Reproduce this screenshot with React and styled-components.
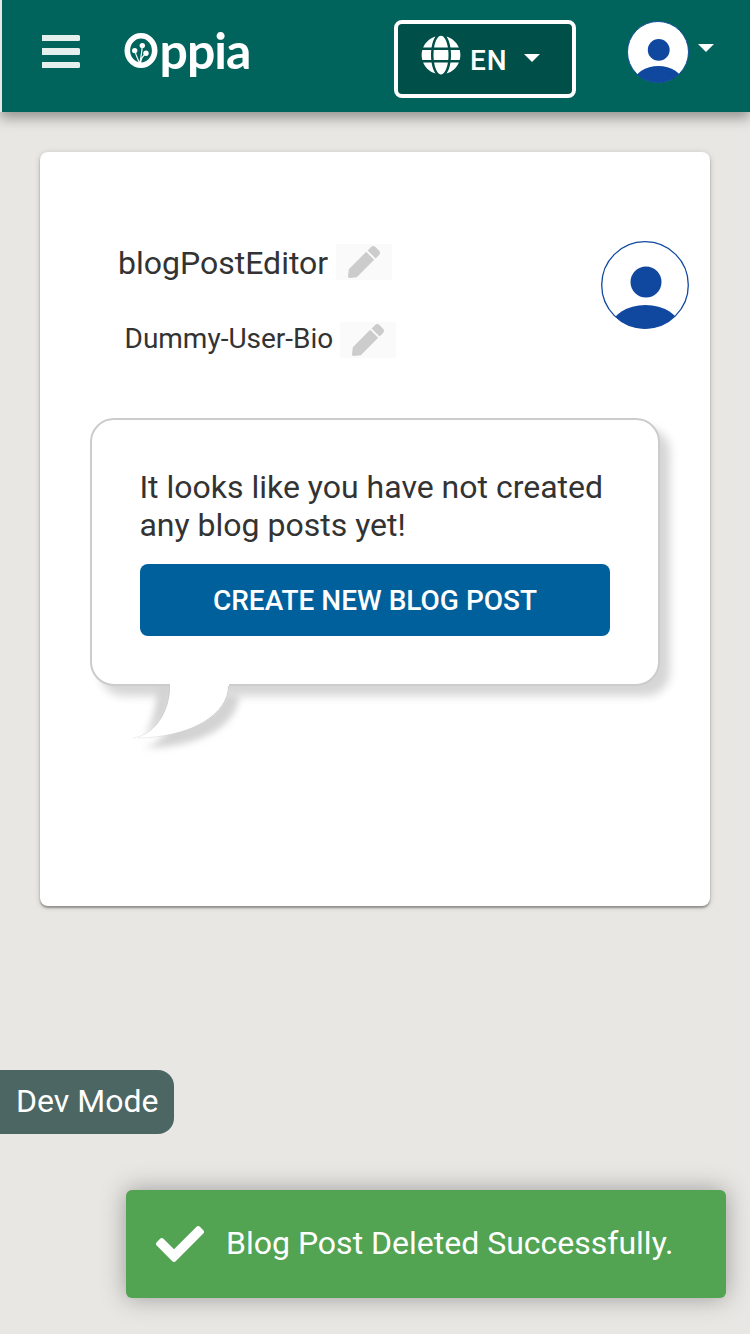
import React from 'react';
import styled, { createGlobalStyle } from 'styled-components';
import { FaCheck, FaGlobe, FaPen } from 'react-icons/fa';

const GlobalStyle = createGlobalStyle`
  * { box-sizing: border-box; }
  body {
    margin: 0;
    background: #e8e7e3;
    color: #333;
    font-family: Roboto, "Liberation Sans", sans-serif;
  }
  button { font: inherit; border: 0; padding: 0; }
  svg { display: block; flex: none; }
`;

const Page = styled.div`
  position: relative;
  height: 1334px;
  overflow: hidden;
`;

const Navbar = styled.header`
  display: flex;
  align-items: flex-start;
  height: 112px;
  padding: 20px 36px 0 40px;
  border-left: 2px solid #e8e7e3;
  background: #00645c;
  color: #fff;
  box-shadow: 0 6px 12px rgba(0, 0, 0, 0.36);
`;

const MenuButton = styled.button`
  display: flex;
  flex-direction: column;
  gap: 7px;
  width: 38px;
  margin-top: 14.5px;
  background: none;
`;

const MenuBar = styled.span`
  height: 6.6px;
  border-radius: 0 1.5px 1.5px 0;
  background: #e5efee;
`;

const Logo = styled.div`
  display: flex;
  align-items: flex-start;
  width: 128px;
  margin: 12px 0 0 44px;
`;

const LogoText = styled.span`
  margin: -12px 0 0 1.5px;
  font: 700 50px/60px Lato, sans-serif;
  letter-spacing: -1px;
`;

const LanguageButton = styled.button`
  display: flex;
  align-items: flex-start;
  width: 182px;
  height: 78px;
  margin-left: 142px;
  padding: 11px 0 0 23px;
  border: 4px solid #fff;
  border-radius: 8px;
  background: #004f48;
  color: #fff;
`;

const LanguageCode = styled.span`
  margin: 10px 0 0 9px;
  font-size: 28px;
  font-weight: 500;
  line-height: 32px;
  letter-spacing: 1px;
`;

const Caret = styled.span`
  margin: ${({ $margin }) => $margin};
  border: 8px solid transparent;
  border-top-color: #fff;
  border-bottom: 0;
`;

const Profile = styled.div`
  display: flex;
  align-items: flex-start;
  margin: 1px 0 0 auto;
`;

const Card = styled.main`
  height: 754px;
  margin: 40px 40px 0;
  padding: 88px 20px 0 50px;
  border-radius: 8px;
  background: #fff;
  box-shadow: 0 2px 2px rgba(0, 0, 0, 0.32), 0 1px 6px rgba(0, 0, 0, 0.16);
`;

const Author = styled.section`
  display: flex;
  justify-content: space-between;
  height: 178px;
  padding: 1px 1px 0 28px;
`;

const AuthorField = styled.div`
  display: flex;
  align-items: center;
  height: 40px;
  margin: ${({ $margin }) => $margin};
  font-size: ${({ $size }) => $size}px;
  line-height: 40px;
`;

const EditButton = styled.button`
  display: flex;
  justify-content: center;
  width: 56px;
  height: 36px;
  margin: ${({ $margin }) => $margin};
  padding-top: 2px;
  background: #fafafa;
  color: #ccc;
`;

const Bubble = styled.section`
  position: relative;
  width: 570px;
  height: 268px;
  padding: 48px;
  border: 2px solid #ccc;
  border-radius: 24px;
  background: #fff;
  box-shadow: 10px 10px 10px #d6d6d6;
`;

const BubbleText = styled.p`
  margin: 0 -4px 20px -0.6px;
  font-size: 32px;
  line-height: 38px;
`;

const CreateButton = styled.button`
  width: 100%;
  height: 72px;
  border-radius: 8px;
  background: #00609c;
  color: #fff;
  font-size: 28px;
  font-weight: 500;
`;

const Tail = styled.svg`
  position: absolute;
  top: 264px;
  left: 28px;
`;

const DevMode = styled.div`
  position: absolute;
  top: 1070px;
  left: 0;
  width: 174px;
  height: 64px;
  padding-left: 16px;
  border-radius: 0 16px 16px 0;
  background: #4c6664;
  color: #fff;
  font-size: 32px;
  line-height: 62px;
  white-space: nowrap;
`;

const Toast = styled.div`
  position: absolute;
  right: 24px;
  bottom: 36px;
  display: flex;
  align-items: center;
  gap: 22px;
  width: 600px;
  height: 108px;
  padding-left: 30px;
  border-radius: 6px;
  background: #52a352;
  color: #fff;
  font-size: 32px;
  white-space: nowrap;
  box-shadow: 0 0 24px #999;
`;

const ToastMessage = styled.span`
  margin-top: -2px;
`;

const Avatar = ({ size }) => (
  <svg width={size} height={size} viewBox="0 0 88 88">
    <defs>
      <clipPath id={`avatar-${size}`}>
        <circle cx="44" cy="44" r="43.5" />
      </clipPath>
    </defs>
    <circle cx="44" cy="44" r="43.3" fill="#fff" stroke="#1048a0" strokeWidth="1.3" />
    <circle cx="45" cy="41" r="15.5" fill="#1048a0" />
    <ellipse cx="44.5" cy="86" rx="34" ry="22" fill="#1048a0" clipPath={`url(#avatar-${size})`} />
  </svg>
);

const LogoMark = () => (
  <svg width="34" height="38" viewBox="0 0 34 38">
    <ellipse cx="17" cy="18.5" rx="13.7" ry="14.8" fill="none" stroke="#fff" strokeWidth="5.6" />
    <path d="M11 19c1 5 3 8 4.500 12M18.300 13.500C18 20 17 24 16 31M22 21.500c-3 2-5 5-5.500 9.500" fill="none" stroke="#fff" strokeWidth="1.200" />
    <circle cx="10.700" cy="18.600" r="2.700" fill="#fff" />
    <circle cx="18.300" cy="13.600" r="2.700" fill="#fff" />
    <circle cx="22" cy="21.200" r="2.700" fill="#fff" />
  </svg>
);

const BubbleTail = () => (
  <Tail width="150" height="90" viewBox="0 0 150 90">
    <defs>
      <filter id="tail-blur" x="-30%" y="-30%" width="160%" height="160%">
        <feGaussianBlur stdDeviation="3.500" />
      </filter>
      <clipPath id="below-bubble">
        <rect y="2" width="150" height="88" />
      </clipPath>
      <linearGradient id="tail-edge" x1="0" y1="0" x2="0" y2="1">
        <stop offset="0" stopColor="#ccc" />
        <stop offset="0.600" stopColor="#ccc" />
        <stop offset="1" stopColor="#ccc" stopOpacity="0.300" />
      </linearGradient>
    </defs>
    <g clipPath="url(#below-bubble)">
      <g filter="url(#tail-blur)">
        <path d="M38 -10H52V4C52 28 40 44 24 52C32 42 38 20 38 -10Z" fill="#d3d3d3" />
        <path d="M58 10H119C119 41 81 64 22 64C43 61 58 36 58 10Z" fill="#d3d3d3" />
      </g>
    </g>
    <path d="M50 0H109V2C109 31 71 54 12 54C33 53 50 29 50 2Z" fill="#fff" />
    <path d="M49.500 2C49.500 28 34 51 13 54M108.500 2C108.500 29 74 53 18 54" fill="none" stroke="url(#tail-edge)" strokeWidth="1" />
  </Tail>
);

export default function App() {
  return (
    <Page>
      <GlobalStyle />
      <Navbar>
        <MenuButton aria-label="Menu">
          <MenuBar />
          <MenuBar />
          <MenuBar />
        </MenuButton>
        <Logo>
          <LogoMark />
          <LogoText>ppia</LogoText>
        </Logo>
        <LanguageButton>
          <FaGlobe size={40} />
          <LanguageCode>EN</LanguageCode>
          <Caret $margin="19px 0 0 16px" />
        </LanguageButton>
        <Profile>
          <Avatar size={62} />
          <Caret $margin="23px 0 0 9px" />
        </Profile>
      </Navbar>
      <Card>
        <Author>
          <div>
            <AuthorField $size={32} $margin="2px 0 0">
              blogPostEditor
              <EditButton $margin="-3px 0 0 8px" aria-label="Edit name">
                <FaPen size={32} />
              </EditButton>
            </AuthorField>
            <AuthorField $size={28} $margin="36px 0 0 6.5px">
              Dummy-User-Bio
              <EditButton $margin="1px 0 0 6.500px" aria-label="Edit bio">
                <FaPen size={32} />
              </EditButton>
            </AuthorField>
          </div>
          <Avatar size={88} />
        </Author>
        <Bubble>
          <BubbleText>
            It looks like you have not created
            <br />
            any blog posts yet!
          </BubbleText>
          <CreateButton>CREATE NEW BLOG POST</CreateButton>
          <BubbleTail />
        </Bubble>
      </Card>
      <DevMode>Dev Mode</DevMode>
      <Toast>
        <FaCheck size={48} />
        <ToastMessage>Blog Post Deleted Successfully.</ToastMessage>
      </Toast>
    </Page>
  );
}
